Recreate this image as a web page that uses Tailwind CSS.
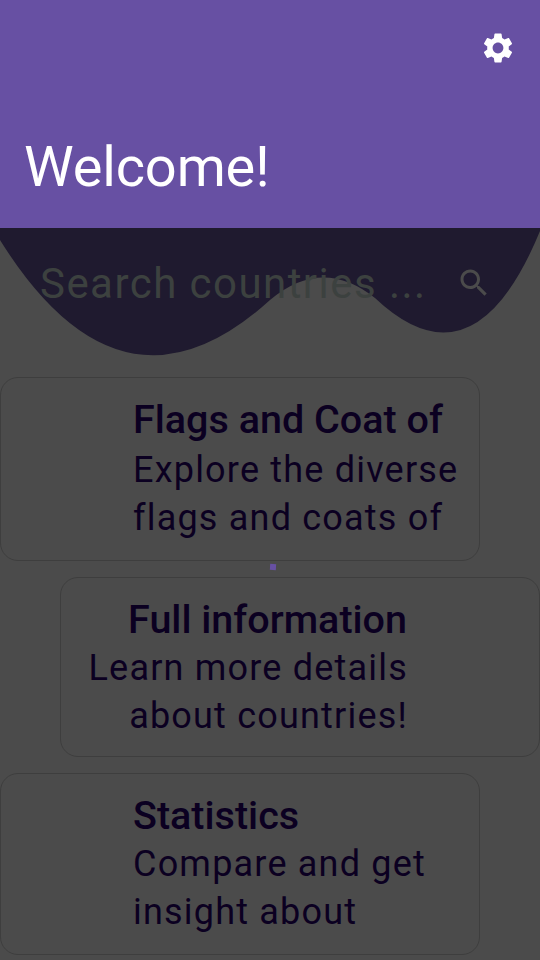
<!DOCTYPE html>
<html lang="en">
<head>
<meta charset="utf-8">
<title>Countries</title>
<script src="https://cdn.jsdelivr.net/npm/@tailwindcss/browser@4"></script>
</head>
<body class="bg-[#4b4b4b] font-['Roboto',sans-serif]">
<div class="relative flex h-[960px] w-[540px] flex-col overflow-hidden bg-[#4b4b4b] whitespace-nowrap">
  <header class="flex h-[228px] shrink-0 flex-col justify-between bg-[#6750a3] pt-[30px] pr-6 pb-[27px] pl-6 text-white">
    <svg class="size-9 self-end" viewBox="0 0 24 24" fill="currentColor"><path d="M19.14 12.94c.04-.3.06-.61.06-.94 0-.32-.02-.64-.07-.94l2.03-1.58c.18-.14.23-.41.12-.61l-1.92-3.32c-.12-.22-.37-.29-.59-.22l-2.39.96c-.5-.38-1.03-.7-1.62-.94l-.36-2.54c-.04-.24-.24-.41-.48-.41h-3.84c-.24 0-.43.17-.47.41l-.36 2.54c-.59.24-1.13.57-1.62.94l-2.39-.96c-.22-.08-.47 0-.59.22L2.74 8.87c-.12.21-.08.47.12.61l2.03 1.58c-.05.3-.09.63-.09.94s.02.64.07.94l-2.03 1.58c-.18.14-.23.41-.12.61l1.92 3.32c.12.22.37.29.59.22l2.39-.96c.5.38 1.03.7 1.62.94l.36 2.54c.05.24.24.41.48.41h3.84c.24 0 .44-.17.47-.41l.36-2.54c.59-.24 1.13-.56 1.62-.94l2.39.96c.22.08.47 0 .59-.22l1.92-3.32c.12-.22.07-.47-.12-.61l-2.01-1.58zM12 15.6c-1.98 0-3.6-1.62-3.6-3.6s1.62-3.6 3.6-3.6 3.6 1.62 3.6 3.6-1.62 3.6-3.6 3.6z"/></svg>
    <h1 class="text-[56px] leading-[68px] tracking-[-0.15px]">Welcome!</h1>
  </header>

  <section class="relative h-[149px] shrink-0">
    <svg class="absolute inset-0" width="540" height="149" viewBox="0 228 540 149"><path fill="#1f1a2f" d="M0 228V240Q121.500 435 270 300Q322 256 375 298Q474 391.500 540 231V228Z"/></svg>
    <div class="relative flex items-start justify-between pt-[30px] pr-12 pl-[40px]">
      <span class="text-[42px] leading-[51px] tracking-[1.45px] text-[#3c413f]">Search countries ...</span>
      <svg class="mt-[7px] size-9 text-[#4b4b4b]" viewBox="0 0 24 24" fill="currentColor"><path d="M15.5 14h-.79l-.28-.27C15.41 12.59 16 11.110 16 9.500 16 5.910 13.090 3 9.500 3S3 5.910 3 9.500 5.910 16 9.500 16c1.610 0 3.090-.59 4.230-1.570l.27.28v.79l5 4.990L20.490 19l-4.990-5zm-6 0C7.010 14 5 11.990 5 9.500S7.010 5 9.500 5 14 7.010 14 9.500 11.990 14 9.500 14z"/></svg>
    </div>
  </section>

  <main class="flex flex-col gap-4 text-[36px] leading-[48px] tracking-[1.2px] text-[#0b0021]">
    <article class="h-[184px] w-[480px] rounded-[18px] border border-[#3e3e3e] pt-[18px] pl-[132px]">
      <h2 class="mb-[2px] text-[39.5px] font-medium tracking-normal">Flags and Coat of</h2>
      <p>Explore the diverse<br>flags and coats of</p>
    </article>
    <article class="h-[180px] w-[480px] self-end rounded-[18px] border border-[#3e3e3e] pt-[18px] pr-[132px] text-right">
      <h2 class="text-[39.5px] font-medium tracking-normal">Full information</h2>
      <p class="-mr-px">Learn more details<br>about countries!</p>
    </article>
    <article class="h-[182px] w-[480px] rounded-[18px] border border-[#3e3e3e] pt-[18px] pl-[132px]">
      <h2 class="text-[39.5px] font-medium tracking-normal">Statistics</h2>
      <p>Compare and get<br>insight about</p>
    </article>
  </main>
  <div class="absolute top-[564px] left-[269.5px] size-[6px] rotate-4 bg-[#6750a3]"></div>
</div>
</body>
</html>
